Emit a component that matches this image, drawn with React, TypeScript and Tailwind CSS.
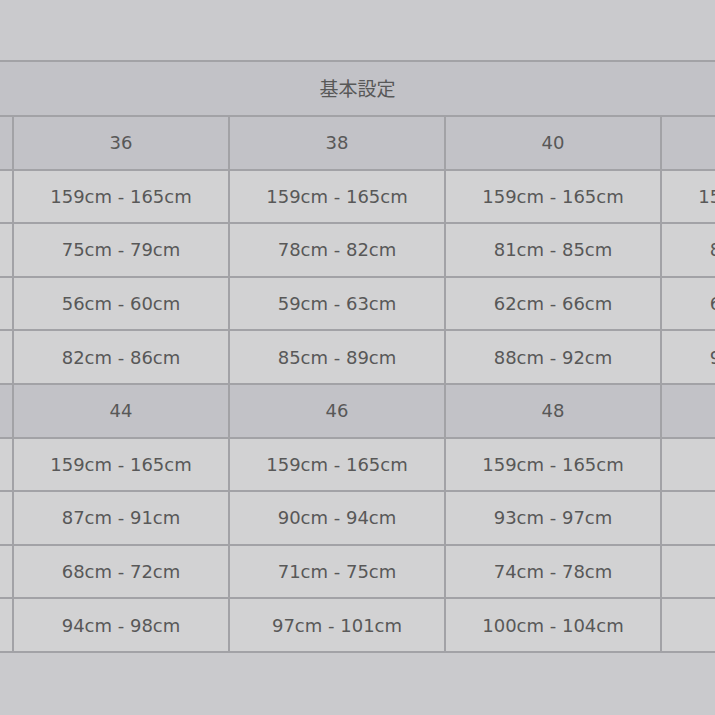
import React from "react"

type Block = { sizes: string[]; rows: string[][] }

const blocks: Block[] = [
  {
    sizes: ["36", "38", "40", "42"],
    rows: [
      ["159cm - 165cm", "159cm - 165cm", "159cm - 165cm", "159cm - 165cm"],
      ["75cm - 79cm", "78cm - 82cm", "81cm - 85cm", "84cm - 88cm"],
      ["56cm - 60cm", "59cm - 63cm", "62cm - 66cm", "65cm - 69cm"],
      ["82cm - 86cm", "85cm - 89cm", "88cm - 92cm", "91cm - 95cm"],
    ],
  },
  {
    sizes: ["44", "46", "48", ""],
    rows: [
      ["159cm - 165cm", "159cm - 165cm", "159cm - 165cm", ""],
      ["87cm - 91cm", "90cm - 94cm", "93cm - 97cm", ""],
      ["68cm - 72cm", "71cm - 75cm", "74cm - 78cm", ""],
      ["94cm - 98cm", "97cm - 101cm", "100cm - 104cm", ""],
    ],
  },
]

const cell = "flex items-center justify-center border-r-2 border-b-2 border-[#a2a2a6] whitespace-nowrap"

export default function App() {
  return (
    <div
      className="w-[715px] h-[715px] overflow-hidden bg-[#cacacd] pt-[60px] text-[18px] text-[#585858]"
      style={{ fontFamily: '"DejaVu Sans", "Noto Sans CJK JP", sans-serif' }}
    >
      <div className="border-t-2 border-[#a2a2a6]">
        {/* section title */}
        <div
          className="w-[715px] h-[55px] flex items-center justify-center bg-[#c2c2c7] border-b-2 border-[#a2a2a6] text-[19px]"
          style={{ fontFamily: '"Noto Sans CJK JP", sans-serif' }}
        >
          基本設定
        </div>

        <div className="grid grid-cols-[14px_216px_216px_216px_216px] auto-rows-[53.6px] w-[878px]">
          {blocks.map((b, bi) => (
            <React.Fragment key={bi}>
              <div className={`${cell} bg-[#c2c2c7]`} />
              {b.sizes.map((s, i) => (
                <div key={`s${i}`} className={`${cell} bg-[#c2c2c7]`}>
                  {s}
                </div>
              ))}
              {b.rows.map((r, ri) => (
                <React.Fragment key={ri}>
                  <div className={`${cell} bg-[#d2d2d3]`} />
                  {r.map((v, ci) => (
                    <div key={ci} className={`${cell} bg-[#d2d2d3]`}>
                      {v}
                    </div>
                  ))}
                </React.Fragment>
              ))}
            </React.Fragment>
          ))}
        </div>
      </div>
    </div>
  )
}
